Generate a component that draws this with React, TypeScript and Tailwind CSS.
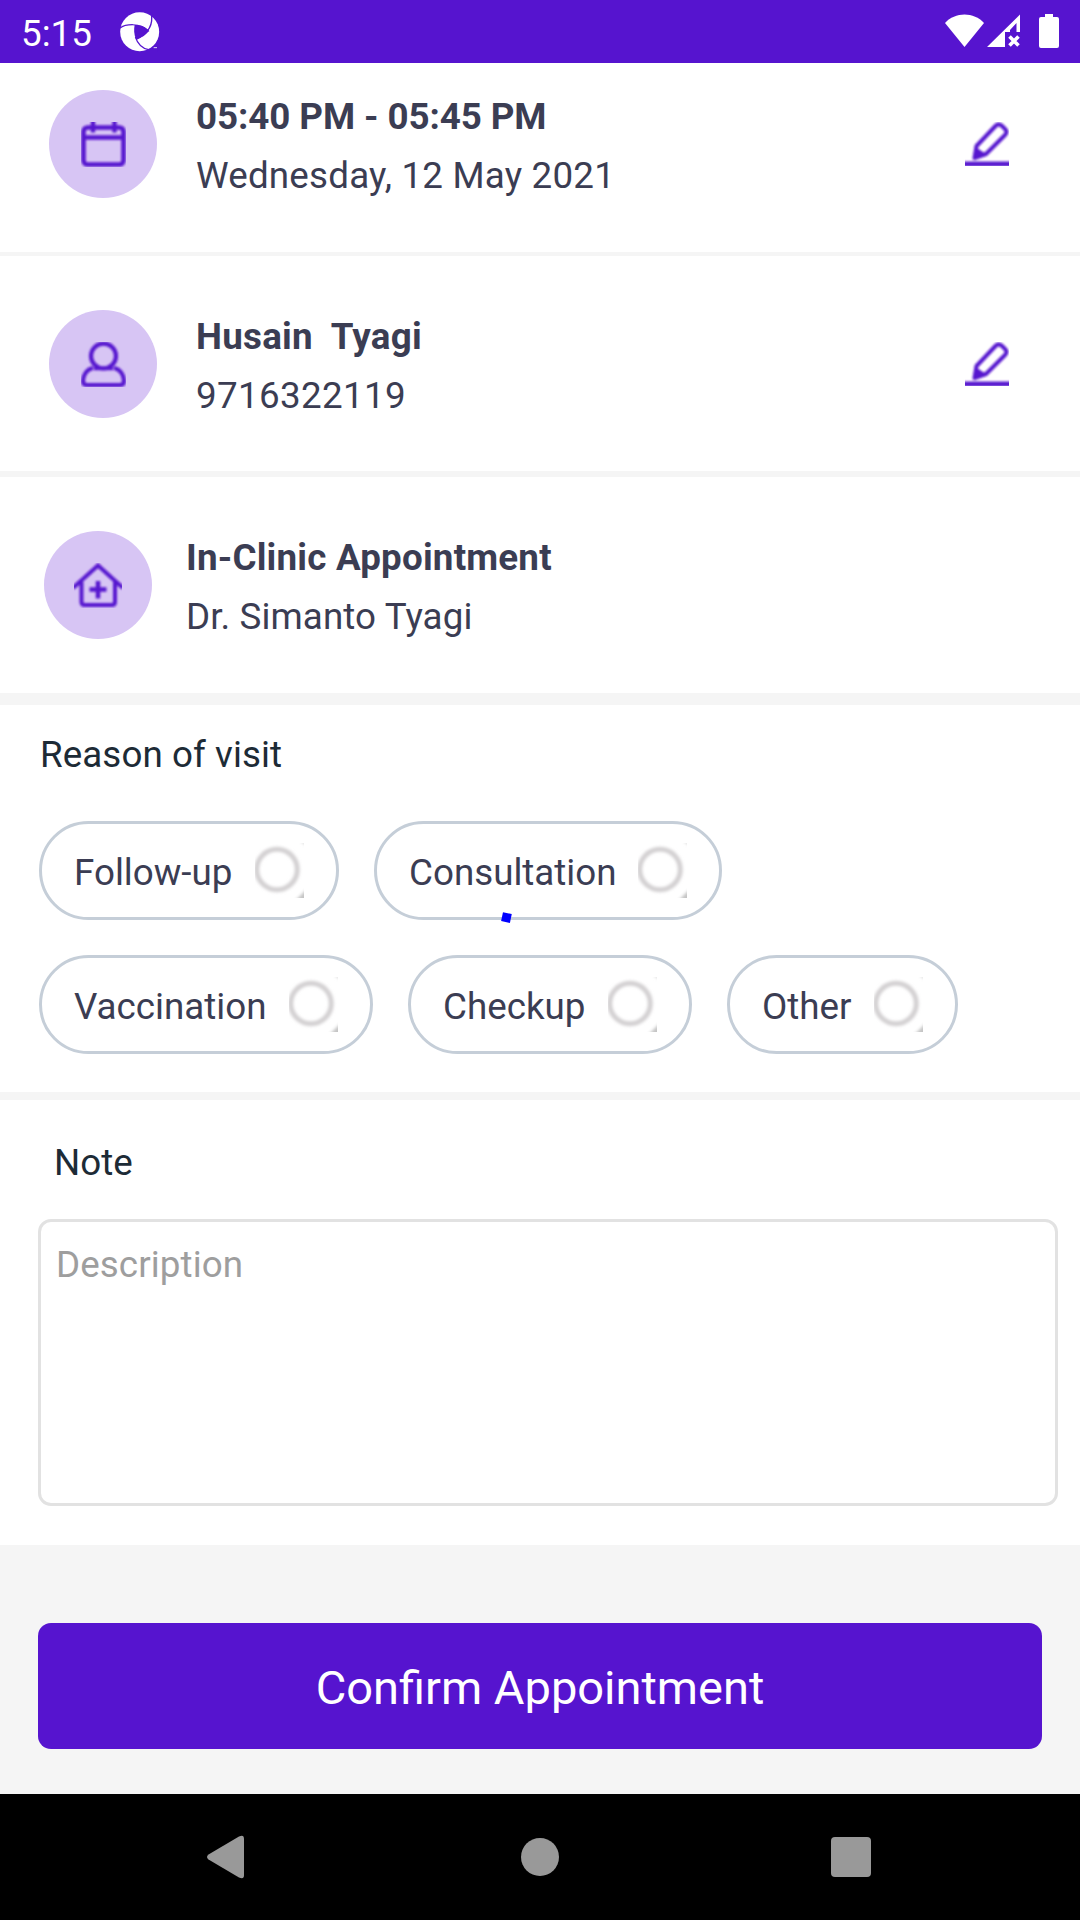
import React from "react";

const PURPLE = "#5614cf";

function SwirlLogo() {
  return (
    <svg className="h-10 w-10" viewBox="360 35 120 120">
      <circle cx="419" cy="94" r="58.5" fill="#fff" />
      <path d="M404 74C420 73 437 79 446 92C438 104 424 113 408 116C402 103 401 88 404 74Z" fill={PURPLE} />
      <path d="M359 84C374 72 420 64 447 93" fill="none" stroke={PURPLE} strokeWidth="3.5" />
      <path d="M453 36C459 62 455 95 408 117" fill="none" stroke={PURPLE} strokeWidth="4" />
      <path d="M406 110C412 128 424 144 446 148L472 142" fill="none" stroke={PURPLE} strokeWidth="3.5" />
      <path d="M438 152L452 145L476 146L470 158L438 158Z" fill={PURPLE} />
      <path d="M461 142h10" stroke="#fff" strokeWidth="2.5" />
    </svg>
  );
}

function StatusBar() {
  return (
    <header className="flex h-[63px] items-start bg-[#5614cf] text-white">
      <span className="ml-[21px] mt-[12px] w-[99px] leading-[43px]">5:15</span>
      <div className="mt-[12px]">
        <SwirlLogo />
      </div>
      <svg className="ml-auto mr-[17px] h-[63px] w-[120px]" viewBox="943 0 120 63" fill="#fff">
        <path d="M945 23C955 11.500 974 11.500 984 23L964.500 47Z" />
        <path
          fillRule="evenodd"
          d="M987 47L1020 14.500V32H1016.500V23L1010 30V32H1005V47Z"
        />
        <path d="M1009.500 36.500L1018.500 45.500M1018.500 36.500L1009.500 45.500" stroke="#fff" strokeWidth="3.600" />
        <path d="M1045 14H1053V17H1057Q1059 17 1059 19V46Q1059 48 1057 48H1041Q1039 48 1039 46V19Q1039 17 1041 17H1045Z" />
      </svg>
    </header>
  );
}

function SoftFilter() {
  return (
    <svg className="absolute h-0 w-0" aria-hidden="true">
      <defs>
        <filter id="soft-icon" filterUnits="userSpaceOnUse" x="-10" y="-10" width="70" height="70">
          <feGaussianBlur stdDeviation="0.8" />
        </filter>
        <filter id="soft-ring" filterUnits="userSpaceOnUse" x="-10" y="-10" width="70" height="75">
          <feGaussianBlur stdDeviation="1.6" />
        </filter>
      </defs>
    </svg>
  );
}

function CalendarIcon() {
  return (
    <svg className="h-[45px] w-[45px]" viewBox="0 0 45 45" fill="none" stroke={PURPLE}>
      <g filter="url(#soft-icon)">
        <rect x="2.500" y="5.500" width="40" height="37" rx="4" strokeWidth="4.600" />
        <path d="M2 15.500H43" strokeWidth="4.600" />
        <path d="M12 -3V10.500M33.500 -3V10.500" strokeWidth="4.300" />
      </g>
    </svg>
  );
}

function UserIcon() {
  return (
    <svg className="h-[45px] w-[45px]" viewBox="0 0 45 45" fill="none" stroke={PURPLE} strokeWidth="4.200">
      <g filter="url(#soft-icon)">
        <ellipse cx="22.500" cy="14" rx="12.500" ry="12.300" />
        <path d="M12 26C6 27 2 33 2 39Q2 43 6 43H39Q43 43 43 39C43 33 39 27 33 26" />
        <path d="M13 26.500H32" strokeWidth="3.500" />
      </g>
    </svg>
  );
}

function ClinicIcon() {
  return (
    <svg className="h-[45px] w-[48px]" viewBox="0 0 48 45" fill="none" stroke={PURPLE} strokeWidth="4">
      <g filter="url(#soft-icon)">
        <path d="M-1 25L24 2.500L49 25" />
        <path d="M7.500 19V39Q7.500 42 10.500 42H38Q41 42 41 39V19" />
        <path d="M24 18V35.500M15.500 26.500H32.500" strokeWidth="4.500" />
      </g>
    </svg>
  );
}

function EditIcon() {
  return (
    <svg className="h-11 w-11" viewBox="0 0 44 44" fill="none" stroke={PURPLE}>
      <g filter="url(#soft-icon)">
        <path
          d="M11.500 24L30.500 4Q33.500 1 36.500 3.500L40 7Q43 10 40 13L21 32L9.500 36Z"
          strokeWidth="4"
          strokeLinejoin="round"
        />
        <path d="M10.500 25.500L21 32.500L8.500 36.500Z" fill={PURPLE} strokeWidth="1" />
        <path d="M-4 42H48" strokeWidth="5" />
      </g>
    </svg>
  );
}

type RowProps = {
  icon: React.ReactNode;
  title: string;
  subtitle: string;
  className: string;
  textGap: string;
  titleSpacing: string;
  subtitleSpacing: string;
  editable?: boolean;
};

function InfoRow({ icon, title, subtitle, className, textGap, titleSpacing, subtitleSpacing, editable }: RowProps) {
  return (
    <section className={`flex items-start bg-white text-[#3b3d53] ${className}`}>
      <div className="mt-[3px] flex h-[108px] w-[108px] items-center justify-center rounded-full bg-[#d7c5f4]">
        {icon}
      </div>
      <div className={`leading-[59px] ${textGap}`}>
        <h2 className={`font-bold whitespace-pre ${titleSpacing}`}>{title}</h2>
        <p className={subtitleSpacing}>{subtitle}</p>
      </div>
      {editable && (
        <button className="ml-auto mr-[71px] mt-[35px]">
          <EditIcon />
        </button>
      )}
    </section>
  );
}

function RadioRing() {
  return (
    <svg className="h-[55px] w-[49px]" viewBox="0 0 49 55">
      <g filter="url(#soft-ring)">
        <circle cx="22" cy="26.500" r="20.300" fill="none" stroke="#d3d0d2" strokeWidth="5" />
        <path d="M52 46V58H40Z" fill="#c4c4c4" />
        <path d="M45 -2H51V3Z" fill="#dcdcdc" />
      </g>
    </svg>
  );
}

function Chip({ label, className, marker }: { label: string; className: string; marker?: boolean }) {
  return (
    <button
      className={`relative flex h-[99px] items-center justify-between rounded-full border-[3px] border-[#c5ced8] pr-[32px] pl-[32px] text-[#3b3d53] ${className}`}
    >
      <span className="pt-[3px] leading-[43px]">{label}</span>
      <RadioRing />
      {marker && <i className="absolute bottom-[-5px] left-[125px] h-[8.5px] w-[8.5px] -translate-y-px rotate-12 bg-[#0000ff]" />}
    </button>
  );
}

export default function App() {
  return (
    <div className="flex h-[1920px] w-[1080px] flex-col overflow-hidden bg-[#f5f5f5] font-['Roboto',sans-serif] text-[36.75px]">
      <SoftFilter />
      <StatusBar />
      <main className="flex flex-1 flex-col">
        <InfoRow
          icon={<CalendarIcon />}
          title="05:40 PM - 05:45 PM"
          subtitle="Wednesday, 12 May 2021"
          className="h-[189px] pt-[24px] pl-[49px]"
          textGap="ml-[39px]"
          titleSpacing="tracking-[-0.09px]"
          subtitleSpacing="tracking-[0.2px]"
          editable
        />
        <InfoRow
          icon={<UserIcon />}
          title="Husain  Tyagi"
          subtitle="9716322119"
          className="mt-1 h-[215px] pt-[51px] pl-[49px]"
          textGap="ml-[39px]"
          titleSpacing="tracking-[0.25px]"
          subtitleSpacing="tracking-[0.35px]"
          editable
        />
        <InfoRow
          icon={<ClinicIcon />}
          title="In-Clinic Appointment"
          subtitle="Dr. Simanto Tyagi"
          className="mt-1.5 h-[216px] pt-[51px] pl-[44px]"
          textGap="ml-[34px]"
          titleSpacing="tracking-[0.2px]"
          subtitleSpacing="tracking-[0.1px]"
        />

        <section className="mt-3 h-[387px] bg-white pt-[28px] pl-[39px]">
          <h3 className="pl-px leading-[43px] tracking-[0.08px] text-[#1d2b36]">Reason of visit</h3>
          <div className="mt-[45px] flex gap-[35px]">
            <Chip label="Follow-up" className="w-[300px]" />
            <Chip label="Consultation" className="w-[348px]" marker />
          </div>
          <div className="mt-[35px] flex gap-[35px]">
            <Chip label="Vaccination" className="w-[334px]" />
            <Chip label="Checkup" className="w-[284px]" />
            <Chip label="Other" className="w-[231px]" />
          </div>
        </section>

        <section className="mt-2 h-[445px] bg-white pt-[41px] pl-[38px]">
          <h3 className="pl-[16px] leading-[43px] text-[#1d2b36]">Note</h3>
          <div className="mt-[35px] h-[287px] w-[1020px] rounded-[13px] border-[3px] border-[#e2e2e2] pt-[21px] pl-[15px] leading-[43px] tracking-[0.1px] text-[#9e9e9e]">
            Description
          </div>
        </section>

        <button className="mx-[38px] mt-[78px] flex h-[126px] items-center justify-center rounded-[13px] bg-[#5614cf] pt-[5px] text-[47px] text-white">
          Confirm Appointment
        </button>
      </main>

      <nav className="flex h-[126px] items-center bg-black">
        <svg className="ml-[207px] h-[44px] w-[37px]" viewBox="0 0 37 44" fill="#999">
          <path d="M1.500 19.500L32 1.500Q37 -1 37 4V40Q37 45 32 42.500L1.500 24.500Q-1.500 22 1.500 19.500Z" />
        </svg>
        <div className="ml-[277px] h-[38px] w-[38px] rounded-full bg-[#999]" />
        <div className="ml-[272px] h-10 w-10 rounded-[4px] bg-[#999]" />
      </nav>
    </div>
  );
}
